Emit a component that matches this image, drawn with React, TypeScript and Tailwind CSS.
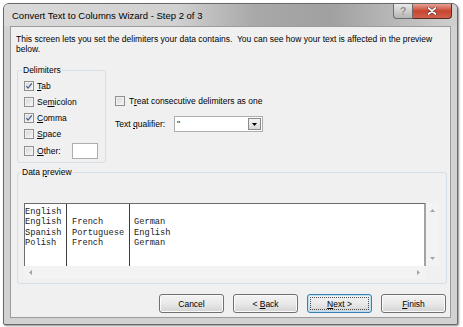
import React from "react";

function CheckBox({ checked }: { checked?: boolean }) {
  return (
    <span className="flex h-[10px] w-[10px] shrink-0 items-center justify-center border border-[#8e8f8f] bg-linear-to-br from-[#d4d6d9] to-[#f7f7f7] shadow-[inset_0_0_0_1px_#f2f2f2]">
      {checked && (
        <svg width="8" height="8" viewBox="0 0 8 8">
          <path d="M1.3 4.1 L3.1 6.1 L6.8 1.3" stroke="#4b5f8f" strokeWidth="1.3" fill="none" />
        </svg>
      )}
    </span>
  );
}

function Tri({ dir }: { dir: "up" | "down" | "left" | "right" }) {
  const vert = dir === "up" || dir === "down";
  const w = vert ? 5 : 3;
  const h = vert ? 3 : 5;
  const pts = {
    up: "0,3 2.5,0 5,3",
    down: "0,0 5,0 2.5,3",
    left: "3,0 3,5 0,2.5",
    right: "0,0 0,5 3,2.5",
  }[dir];
  return (
    <svg width={w} height={h} viewBox={`0 0 ${w} ${h}`}>
      <polygon points={pts} fill="#a4a4a4" />
    </svg>
  );
}

function Btn({ children, def }: { children: React.ReactNode; def?: boolean }) {
  return (
    <div
      className={
        "flex h-[19px] w-[65px] rounded-[3px] border bg-linear-to-b from-[#f3f3f3] via-[#e9e9e9] to-[#d3d3d3] " +
        (def ? "border-[#3c7fb1] shadow-[inset_0_0_0_1px_#b9e0f5]" : "border-[#707070] shadow-[inset_0_0_0_1px_#fbfbfb]")
      }
    >
      <div
        className={
          "m-[2px] flex flex-1 items-center justify-center leading-[10px] " +
          (def ? "border border-dotted border-[#4a4a4a]" : "border border-transparent")
        }
      >
        <span className="whitespace-pre">{children}</span>
      </div>
    </div>
  );
}

export default function App() {
  return (
    <div className="h-[327px] w-[463px] overflow-hidden bg-white pl-[3px] pt-[3px] font-['Liberation_Sans',Arial,sans-serif] text-[8.5px] text-black">
      <div className="flex h-[322px] w-[455px] flex-col rounded-t-[6px] rounded-b-[2px] border border-[#6a6a6a] bg-[#d2d2d2] px-[6px] pb-[6px] shadow-[1px_1px_2px_rgba(0,0,0,0.45)]">
        {/* title bar */}
        <div className="-mx-[6px] flex h-[22px] shrink-0 items-start rounded-t-[5px] bg-[linear-gradient(90deg,#dadada_0%,#d1d1d1_38%,#a9a9a9_55%,#a0a0a0_72%,#b8b8b8_86%,#d0d0d0_100%)] px-[6px]">
          <div className="pl-[2px] pt-[6px] text-[9.5px] leading-[11px] text-black">
            Convert Text to Columns Wizard - Step 2 of 3
          </div>
          <div className="-mr-[1px] ml-auto flex">
            <div className="flex h-[15px] w-[20px] items-center justify-center rounded-bl-[4px] border border-t-0 border-[#6b6b6b] bg-linear-to-b from-[#e9e9e9] to-[#b5b5b5] text-[11px] font-bold leading-[11px] text-[#8a8a8a] [text-shadow:0_0_1px_#fff]">
              ?
            </div>
            <div className="flex h-[15px] w-[39px] items-center justify-center rounded-br-[4px] border border-t-0 border-l-0 border-[#5a2a24] bg-linear-to-b from-[#e6a296] via-[#c8442f] to-[#d2604c]">
              <svg width="10" height="8" viewBox="0 0 10 8">
                <path d="M1.5 1 L8.5 7 M8.5 1 L1.5 7" stroke="#5a2a24" strokeWidth="3" strokeLinecap="round" />
                <path d="M1.5 1 L8.5 7 M8.5 1 L1.5 7" stroke="#ffffff" strokeWidth="1.8" strokeLinecap="round" />
              </svg>
            </div>
          </div>
        </div>

        {/* content */}
        <div className="flex flex-1 flex-col border border-[#9c9c9c] bg-[#f0f0f0]">
          <div className="pl-[5px] pt-[7px] leading-[10px]">
            This screen lets you set the delimiters your data contains.{"\u00a0 "}You can see how your text is affected in the preview
            <br />
            below.
          </div>

          {/* middle row */}
          <div className="mt-[16px] flex">
            <div className="relative ml-[6px] h-[93px] w-[89px] rounded-[3px] border border-[#d5dfe5]">
              <span className="absolute -top-[6px] left-[4px] bg-[#f0f0f0] px-[1px] leading-[10px]">Delimiters</span>
              <div className="flex flex-col pl-[6px] pt-[7px]">
                <div className="flex h-[16px] items-center gap-[3px]">
                  <CheckBox checked />
                  <span>
                    <span className="underline">T</span>ab
                  </span>
                </div>
                <div className="flex h-[16px] items-center gap-[3px]">
                  <CheckBox />
                  <span>
                    Se<span className="underline">m</span>icolon
                  </span>
                </div>
                <div className="flex h-[16px] items-center gap-[3px]">
                  <CheckBox checked />
                  <span>
                    <span className="underline">C</span>omma
                  </span>
                </div>
                <div className="flex h-[16px] items-center gap-[3px]">
                  <CheckBox />
                  <span>
                    <span className="underline">S</span>pace
                  </span>
                </div>
                <div className="flex h-[18px] items-center gap-[3px]">
                  <CheckBox />
                  <span>
                    <span className="underline">O</span>ther:
                  </span>
                  <span className="ml-[8px] h-[16px] w-[26px] border border-[#abadb3] bg-white" />
                </div>
              </div>
            </div>

            <div className="ml-[9px] flex flex-col pt-[25px]">
              <div className="flex h-[12px] items-center gap-[4px]">
                <CheckBox />
                <span>
                  T<span className="underline">r</span>eat consecutive delimiters as one
                </span>
              </div>
              <div className="mt-[9px] flex h-[16px] items-center">
                <span className="w-[59px]">
                  Text <span className="underline">q</span>ualifier:
                </span>
                <div className="flex h-[16px] w-[89px] items-center border border-[#abadb3] bg-white">
                  <span className="flex-1 pl-[2px] leading-[10px]">"</span>
                  <div className="mr-[1px] flex h-[12px] w-[13px] items-center justify-center border border-[#8a8a8a] bg-linear-to-b from-[#f4f4f4] to-[#d8d8d8]">
                    <svg width="5" height="3" viewBox="0 0 5 3">
                      <polygon points="0,0 5,0 2.5,3" fill="#000" />
                    </svg>
                  </div>
                </div>
              </div>
            </div>
          </div>

          {/* data preview */}
          <div className="relative ml-[6px] mt-[9px] h-[112px] w-[430px] rounded-[3px] border border-[#d5dfe5]">
            <span className="absolute -top-[6px] left-[3px] bg-[#f0f0f0] px-[1px] leading-[10px]">
              Data <span className="underline">p</span>review
            </span>
            <div className="ml-[6px] mt-[30px] grid grid-cols-[402px_13px] grid-rows-[63px_13px]">
              <div className="flex overflow-hidden border-l border-t border-r-2 border-l-[#6c6c6c] border-t-[#6c6c6c] border-r-[#a3a3a3] bg-white font-['Liberation_Mono','Courier_New',monospace] text-[8.7px] leading-[10.3px] text-[#222]">
                <div className="w-[42px] border-r border-[#3e3e3e] pt-[3px]">
                  <div>English</div>
                  <div>English</div>
                  <div>Spanish</div>
                  <div>Polish</div>
                </div>
                <div className="w-[63px] border-r border-[#3e3e3e] pl-[5px] pt-[3px]">
                  <div>{"\u00a0"}</div>
                  <div>French</div>
                  <div>Portuguese</div>
                  <div>French</div>
                </div>
                <div className="flex-1 pl-[4px] pt-[3px]">
                  <div>{"\u00a0"}</div>
                  <div>German</div>
                  <div>English</div>
                  <div>German</div>
                </div>
              </div>
              <div className="flex flex-col items-center justify-between bg-[#f3f3f3] pb-[6px] pt-[6px]">
                <Tri dir="up" />
                <Tri dir="down" />
              </div>
              <div className="flex items-center justify-between bg-[#f3f3f3] pl-[5px] pr-[6px]">
                <Tri dir="left" />
                <Tri dir="right" />
              </div>
              <div className="bg-[#f0f0f0]" />
            </div>
          </div>

          {/* buttons */}
          <div className="mt-[10px] flex justify-end gap-[9px] pr-[4px]">
            <Btn>Cancel</Btn>
            <Btn>
              {"< "}
              <span className="underline">B</span>ack
            </Btn>
            <Btn def>
              <span className="underline">N</span>ext {">"}
            </Btn>
            <Btn>
              <span className="underline">F</span>inish
            </Btn>
          </div>
        </div>
      </div>
    </div>
  );
}
